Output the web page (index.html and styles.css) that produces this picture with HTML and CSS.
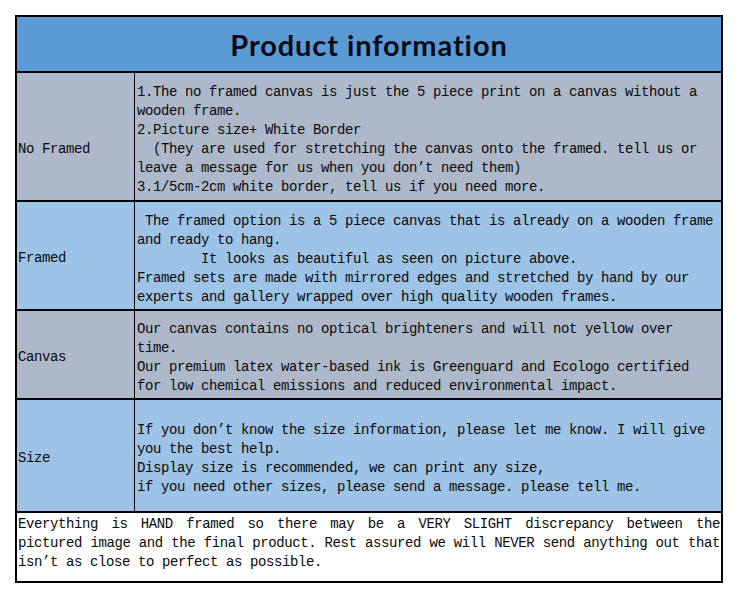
FILE: index.html
```html
<!DOCTYPE html>
<html lang="en">
<head>
<meta charset="utf-8">
<title>Product information</title>
<link rel="stylesheet" href="styles.css">
</head>
<body>
<div class="sheet">
  <div class="title">Product information</div>

  <div class="label gray label-low">No Framed</div>
  <div class="content gray">
    <div class="ln">1.The no framed canvas is just the 5 piece print on a canvas without a</div>
    <div class="ln">wooden frame.</div>
    <div class="ln">2.Picture size+ White Border</div>
    <div class="ln">  (They are used for stretching the canvas onto the framed. tell us or</div>
    <div class="ln">leave a message for us when you don’t need them)</div>
    <div class="ln">3.1/5cm-2cm white border, tell us if you need more.</div>
  </div>

  <div class="label blue">Framed</div>
  <div class="content blue">
    <div class="ln"> The framed option is a 5 piece canvas that is already on a wooden frame</div>
    <div class="ln">and ready to hang.</div>
    <div class="ln">        It looks as beautiful as seen on picture above.</div>
    <div class="ln">Framed sets are made with mirrored edges and stretched by hand by our</div>
    <div class="ln">experts and gallery wrapped over high quality wooden frames.</div>
  </div>

  <div class="label gray">Canvas</div>
  <div class="content gray">
    <div class="ln">Our canvas contains no optical brighteners and will not yellow over</div>
    <div class="ln">time.</div>
    <div class="ln">Our premium latex water-based ink is Greenguard and Ecologo certified</div>
    <div class="ln">for low chemical emissions and reduced environmental impact.</div>
  </div>

  <div class="label blue">Size</div>
  <div class="content blue">
    <div class="ln">If you don’t know the size information, please let me know. I will give</div>
    <div class="ln">you the best help.</div>
    <div class="ln">Display size is recommended, we can print any size,</div>
    <div class="ln">if you need other sizes, please send a message. please tell me.</div>
  </div>

  <div class="footer">
    <div class="jl">Everything is HAND framed so there may be a VERY SLIGHT discrepancy between the</div>
    <div class="jl">pictured image and the final product. Rest assured we will NEVER send anything out that</div>
    <div>isn’t as close to perfect as possible.</div>
  </div>
</div>
</body>
</html>
```

FILE: styles.css
```css
html, body {
  margin: 0;
  padding: 0;
  background: #ffffff;
}

body {
  padding: 15px;
}

.sheet {
  width: 704px;
  border: 2px solid #000;
  background: #000;
  display: grid;
  grid-template-columns: 117px 586px;
  grid-template-rows: 54px 127px 107px 87px 111px 68px;
  column-gap: 1px;
  row-gap: 2px;
  font-family: "Liberation Mono", "DejaVu Sans Mono", monospace;
  font-size: 14px;
  letter-spacing: -0.4px;
  line-height: 19px;
  color: #0a0a0a;
}

.title {
  grid-column: 1 / 3;
  background: #5b9bd5;
  display: flex;
  align-items: center;
  justify-content: center;
  font-family: Lato, "Open Sans", sans-serif;
  font-weight: 700;
  font-size: 29px;
  letter-spacing: 0.9px;
  font-variant-ligatures: none;
  color: #0b0b16;
}

.gray {
  background: #adb9ca;
}

.blue {
  background: #9dc3e6;
}

.label {
  display: flex;
  align-items: center;
  padding: 6px 1px 0;
}

.label-low {
  padding-top: 26px;
}

.content {
  display: flex;
  flex-direction: column;
  justify-content: center;
  padding: 7px 2px 0;
}

.ln {
  white-space: pre;
}

.footer {
  grid-column: 1 / 3;
  background: #fff;
  padding: 2px 1px 0;
}

.jl {
  text-align: justify;
  text-align-last: justify;
}
```
